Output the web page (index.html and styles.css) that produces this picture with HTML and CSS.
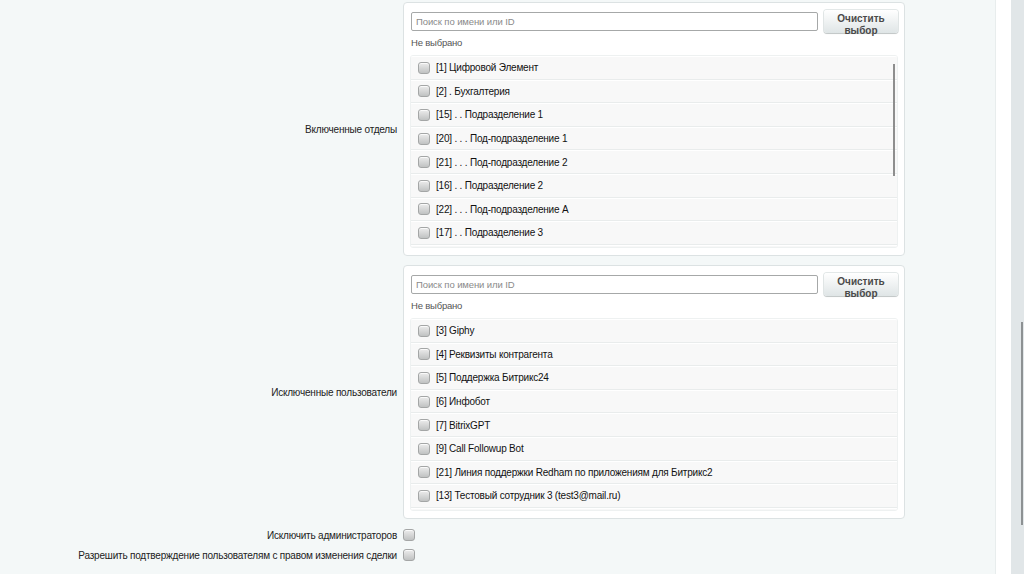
FILE: index.html
```html
<!DOCTYPE html>
<html>
<head>
    <meta charset="UTF-8">
    <title>Настройки доступа</title>
    <link rel="stylesheet" href="styles.css">
</head>
<body>
    <div class="page">
        <div class="content">
            <div class="row">
                <div class="row-label">Включенные отделы</div>
                <div class="picker">
                    <div class="picker-search">
                        <input type="text" class="search-input" placeholder="Поиск по имени или ID">
                        <button class="clear-btn">Очистить выбор</button>
                    </div>
                    <div class="picker-state">Не выбрано</div>
                    <div class="picker-list">
                        <label class="item"><span class="box"></span>[1] Цифровой Элемент</label>
                        <label class="item"><span class="box"></span>[2] . Бухгалтерия</label>
                        <label class="item"><span class="box"></span>[15] . . Подразделение 1</label>
                        <label class="item"><span class="box"></span>[20] . . . Под-подразделение 1</label>
                        <label class="item"><span class="box"></span>[21] . . . Под-подразделение 2</label>
                        <label class="item"><span class="box"></span>[16] . . Подразделение 2</label>
                        <label class="item"><span class="box"></span>[22] . . . Под-подразделение А</label>
                        <label class="item"><span class="box"></span>[17] . . Подразделение 3</label>
                        <div class="item item-more"></div>
                        <div class="list-scroll"></div>
                    </div>
                </div>
            </div>

            <div class="row">
                <div class="row-label">Исключенные пользователи</div>
                <div class="picker">
                    <div class="picker-search">
                        <input type="text" class="search-input" placeholder="Поиск по имени или ID">
                        <button class="clear-btn">Очистить выбор</button>
                    </div>
                    <div class="picker-state">Не выбрано</div>
                    <div class="picker-list">
                        <label class="item"><span class="box"></span>[3] Giphy</label>
                        <label class="item"><span class="box"></span>[4] Реквизиты контрагента</label>
                        <label class="item"><span class="box"></span>[5] Поддержка Битрикс24</label>
                        <label class="item"><span class="box"></span>[6] Инфобот</label>
                        <label class="item"><span class="box"></span>[7] BitrixGPT</label>
                        <label class="item"><span class="box"></span>[9] Call Followup Bot</label>
                        <label class="item"><span class="box"></span>[21] Линия поддержки Redham по приложениям для Битрикс2</label>
                        <label class="item"><span class="box"></span>[13] Тестовый сотрудник 3 (test3@mail.ru)</label>
                        <div class="item item-more"></div>
                    </div>
                </div>
            </div>

            <div class="check-rows">
                <div class="check-row">
                    <div class="row-label">Исключить администраторов</div>
                    <span class="box"></span>
                </div>
                <div class="check-row">
                    <div class="row-label">Разрешить подтверждение пользователям с правом изменения сделки</div>
                    <span class="box"></span>
                </div>
            </div>
        </div>
        <div class="edge"></div>
        <div class="scrollbar"><div class="thumb"></div></div>
    </div>
</body>
</html>
```

FILE: styles.css
```css
html, body {
    margin: 0;
    padding: 0;
    height: 100%;
}

body {
    font-family: "Liberation Sans", Arial, sans-serif;
    font-size: 10px;
    letter-spacing: -0.2px;
    color: #222;
    background-color: #f4f8f8;
    overflow: hidden;
}

.page {
    display: flex;
    height: 574px;
}

.content {
    width: 995px;
    flex: none;
    padding-top: 2px;
    box-sizing: border-box;
    display: flex;
    flex-direction: column;
    gap: 9px;
}

.edge {
    width: 15px;
    flex: none;
    background-color: #ffffff;
    border-left: 1px solid #e8eded;
}

.scrollbar {
    flex: 1;
    background-color: #e1e6e8;
    padding-top: 322px;
    box-sizing: border-box;
}

.thumb {
    height: 203px;
    margin-left: auto;
    width: 2px;
    margin-right: 1px;
    background-color: #8d9193;
}

.row {
    display: flex;
    align-items: center;
}

.row-label {
    width: 403px;
    flex: none;
    text-align: right;
    padding-right: 6px;
    box-sizing: border-box;
    color: #222;
}

.picker {
    width: 502px;
    box-sizing: border-box;
    background-color: #ffffff;
    border: 1px solid #dce2e3;
    border-radius: 4px;
    padding: 7px 6px 7px 6px;
}

.picker-search {
    display: flex;
    align-items: center;
    gap: 6px;
    padding-left: 1px;
}

.search-input {
    width: 407px;
    height: 19px;
    box-sizing: border-box;
    border: 1px solid #a6a8a8;
    border-radius: 2px;
    padding: 0 4px;
    font-family: inherit;
    font-size: 9.5px;
    letter-spacing: -0.1px;
    color: #333;
    background: #fff;
    outline: none;
}

.search-input::placeholder {
    color: #8a8a8a;
}

.clear-btn {
    width: 74px;
    height: 23px;
    border: none;
    border-radius: 3px;
    background: linear-gradient(#ffffff, #dfe5e6);
    box-shadow: 0 1px 1px rgba(0, 0, 0, 0.15), 0 0 0 1px #e3e8e8;
    font-family: inherit;
    font-size: 10px;
    font-weight: bold;
    letter-spacing: 0;
    color: #4a4a4a;
    line-height: 12px;
    padding: 3px 6px 0;
    text-align: center;
    white-space: normal;
    overflow: visible;
    display: flex;
    align-items: flex-start;
    justify-content: center;
}

.picker-state {
    margin-top: 3px;
    height: 14px;
    line-height: 14px;
    padding-left: 1px;
    font-size: 9.5px;
    color: #555;
}

.picker-list {
    position: relative;
    margin-top: 5px;
    height: 193px;
    overflow: hidden;
    border: 1px solid #eef1f1;
    border-radius: 3px;
    box-sizing: border-box;
}

.item {
    display: flex;
    align-items: center;
    height: 23.6px;
    box-sizing: border-box;
    padding-left: 7px;
    background-color: #f8f8f8;
    border-bottom: 1px solid #e9ecec;
    border-top: 1px solid #ffffff;
    color: #111;
    white-space: nowrap;
}

.box {
    display: inline-block;
    width: 12px;
    height: 12px;
    flex: none;
    margin-right: 6px;
    box-sizing: border-box;
    border: 1px solid #a4a6a6;
    border-radius: 3px;
    background: linear-gradient(#ececec, #c0c2c2);
    box-shadow: inset 0 1px 0 #fafafa;
}

.list-scroll {
    position: absolute;
    top: 8px;
    right: 2px;
    width: 2px;
    height: 112px;
    background-color: #8e8e8e;
}

.check-rows {
    margin-top: -3px;
}

.check-row {
    display: flex;
    align-items: center;
    height: 20px;
}

.check-row .box {
    margin-right: 0;
}
```
